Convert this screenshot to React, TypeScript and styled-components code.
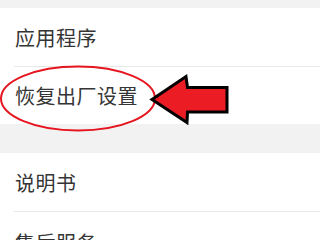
import React from "react";
import styled, { createGlobalStyle } from "styled-components";

const Global = createGlobalStyle`
  html, body { margin: 0; padding: 0; background: #ffffff; }
  body { font-family: "Noto Sans CJK SC", "Noto Sans", sans-serif; }
`;

const Page = styled.div`
  position: relative;
  width: 320px;
  height: 240px;
  overflow: hidden;
  background: #f2f2f2;
  display: flex;
  flex-direction: column;
`;

const Gap = styled.div<{ $h: number }>`
  height: ${(p) => p.$h}px;
  flex: none;
`;

const Group = styled.div`
  background: #ffffff;
  display: flex;
  flex-direction: column;
  flex: none;
`;

const Row = styled.div<{ $h: number; $line?: boolean }>`
  height: ${(p) => p.$h}px;
  margin-left: 14px;
  padding-left: 1px;
  display: flex;
  align-items: center;
  border-bottom: ${(p) => (p.$line ? "1px solid #e8e8e8" : "none")};
  font-size: 20px;
  color: #353535;
  letter-spacing: 0.5px;
  flex: none;
`;

const Overlay = styled.svg`
  position: absolute;
  left: 0;
  top: 0;
  pointer-events: none;
`;

export default function App() {
  return (
    <>
      <Global />
      <Page>
        <Gap $h={8} />
        <Group>
          <Row $h={58} $line>应用程序</Row>
          <Row $h={57}>恢复出厂设置</Row>
        </Group>
        <Gap $h={29} />
        <Group>
          <Row $h={58} $line>说明书</Row>
          <Row $h={60}>售后服务</Row>
        </Group>
        <Overlay width={320} height={240} viewBox="0 0 320 240">
          <ellipse cx={78} cy={98.5} rx={77} ry={32} fill="none" stroke="#e5141e" strokeWidth={2} />
          <polygon
            points="152,99.5 186,76.5 187.5,87.5 227,87.5 227,112 187.5,112 187,122.5"
            fill="#ec1c24"
            stroke="#000"
            strokeWidth={3}
            strokeLinejoin="miter"
          />
        </Overlay>
      </Page>
    </>
  );
}
